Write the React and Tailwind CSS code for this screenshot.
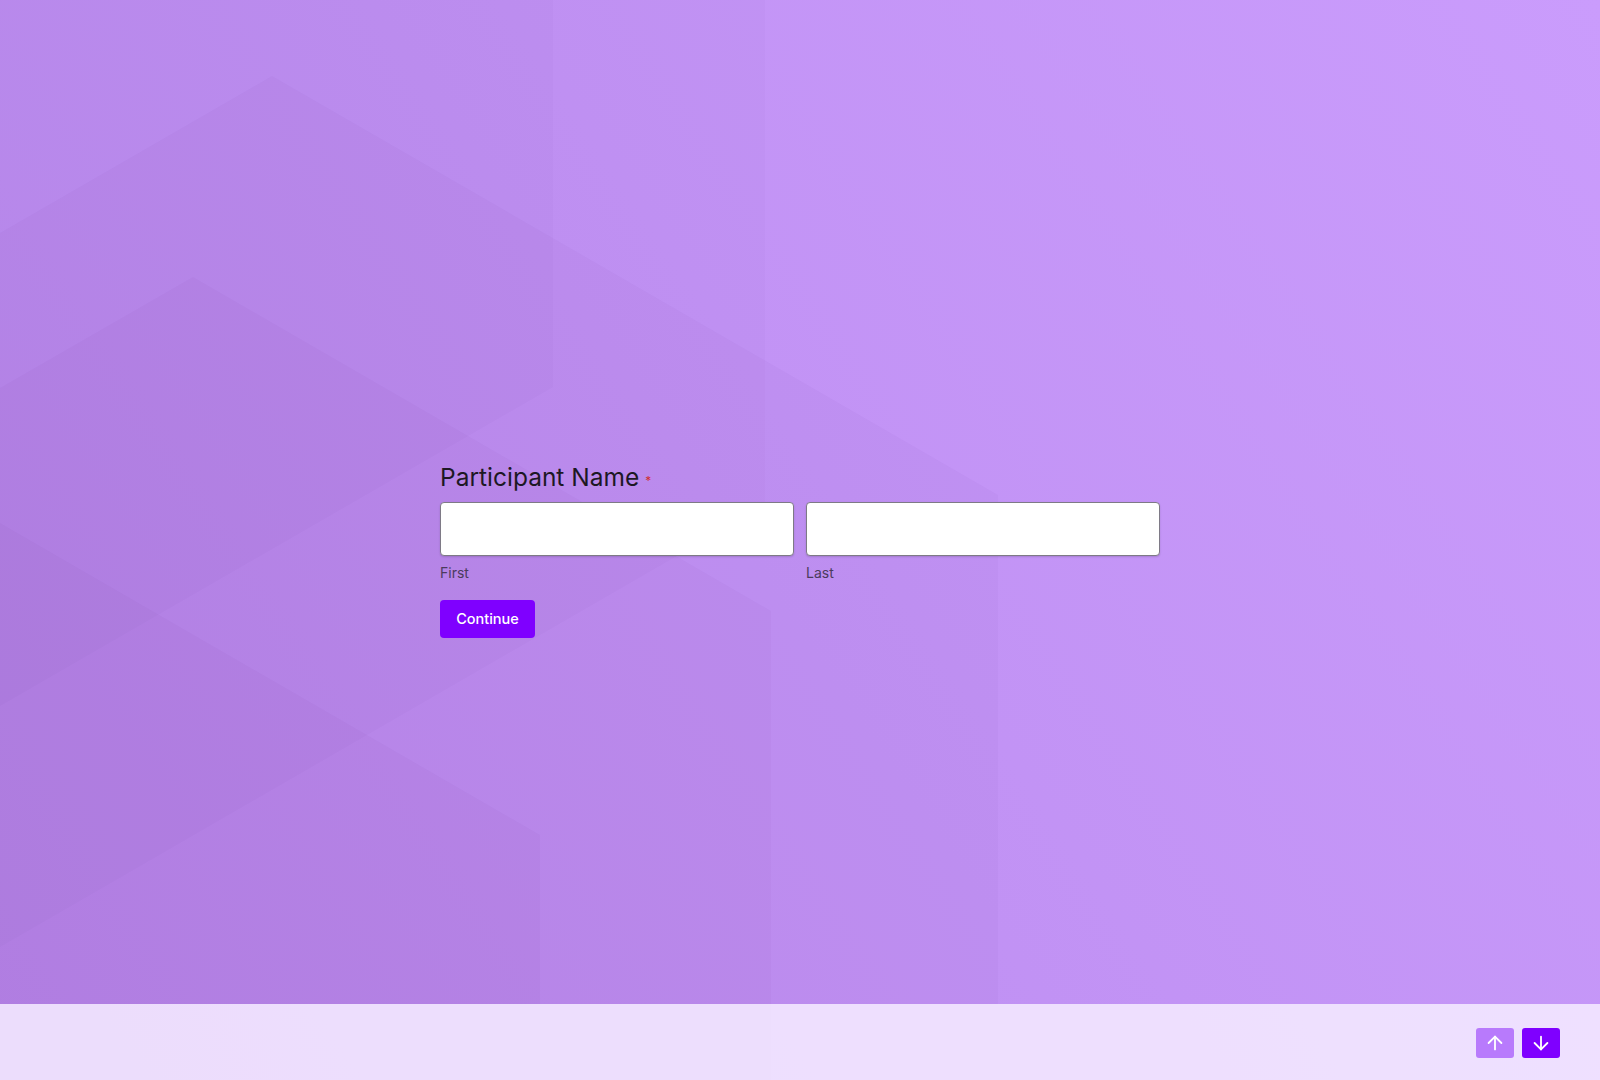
import React from "react";
import { ArrowUp, ArrowDown } from "lucide-react";

export default function App() {
  return (
    <div className="relative w-full h-[1080px] overflow-hidden font-['Inter',_'Noto_Sans',_sans-serif]">
      <svg
        className="absolute inset-0 w-full h-full"
        viewBox="0 0 1600 1080"
        preserveAspectRatio="none"
      >
        <defs>
          <linearGradient id="bg" x1="1600" y1="0" x2="0" y2="1080" gradientUnits="userSpaceOnUse">
            <stop offset="0" stopColor="#ca9cfc" />
            <stop offset="1" stopColor="#b989ed" />
          </linearGradient>
        </defs>
        <rect width="1600" height="1080" fill="url(#bg)" />
        <g fill="#581c87">
          <polygon points="0,0 553,0 553,387 0,706" fillOpacity="0.022" />
          <polygon points="0,0 765,0 765,505 0,947" fillOpacity="0.025" />
          <polygon points="272,76 998,495 998,1080 0,1080 0,233" fillOpacity="0.03" />
          <polygon points="193,277 771,611 771,1080 0,1080 0,388" fillOpacity="0.03" />
          <polygon points="0,523 540,835 540,1080 0,1080" fillOpacity="0.03" />
        </g>
      </svg>

      <div className="relative flex flex-col h-full">
        <main className="flex-1 flex justify-center pt-[461px]">
          <div className="w-[720px]">
            <div className="flex items-center h-8">
              <span className="text-[24.5px] leading-8 text-[#1d1824]">Participant Name</span>
              <span className="ml-[6px] mt-[8px] text-[12px] leading-none text-[#d12f2f]">*</span>
            </div>
            <div className="mt-[9px] grid grid-cols-2 gap-3">
              <div className="flex flex-col">
                <div className="h-[54px] bg-white border border-[#7e7a86] rounded-[4px] shadow-[0_1px_2px_rgba(0,0,0,0.15)]" />
                <span className="mt-[7px] text-[14px] leading-5 text-[#4b3b5d]">First</span>
              </div>
              <div className="flex flex-col">
                <div className="h-[54px] bg-white border border-[#7e7a86] rounded-[4px] shadow-[0_1px_2px_rgba(0,0,0,0.15)]" />
                <span className="mt-[7px] text-[14px] leading-5 text-[#4b3b5d]">Last</span>
              </div>
            </div>
            <button className="mt-[17px] h-[38px] w-[95px] rounded-[4px] bg-[#7f00ff] text-white text-[14.5px] font-medium">
              Continue
            </button>
          </div>
        </main>
        <footer className="h-[76px] bg-[#f3e8ff]/90 flex items-center justify-end gap-2 pr-10 pt-[2px]">
          <button className="w-[38px] h-[30px] rounded-[3px] bg-[#b87afc] flex items-center justify-center text-white">
            <ArrowUp size={22} strokeWidth={2} />
          </button>
          <button className="w-[38px] h-[30px] rounded-[3px] bg-[#7f00ff] flex items-center justify-center text-white">
            <ArrowDown size={22} strokeWidth={2} />
          </button>
        </footer>
      </div>
    </div>
  );
}
